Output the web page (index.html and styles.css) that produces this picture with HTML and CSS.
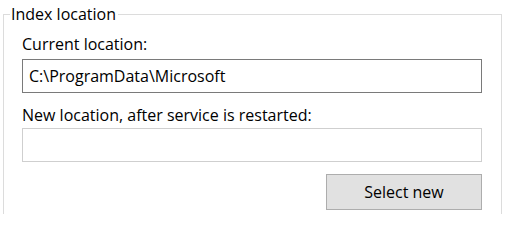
FILE: index.html
```html
<!DOCTYPE html>
<html>
<head>
<meta charset="utf-8">
<link rel="stylesheet" href="styles.css">
</head>
<body>
<fieldset class="group">
  <legend class="group-title">Index location</legend>
  <div class="label label-first">Current location:</div>
  <div class="field field-current">C:\ProgramData\Microsoft</div>
  <div class="label label-second">New location, after service is restarted:</div>
  <div class="field field-new"></div>
  <div class="actions">
    <button class="btn" type="button">Select new</button>
  </div>
</fieldset>
</body>
</html>
```

FILE: styles.css
```css
html, body {
  margin: 0;
  padding: 0;
  background: #ffffff;
}
body {
  font-family: "Open Sans", "Noto Sans", sans-serif;
  font-size: 16px;
  color: #000000;
  width: 530px;
  height: 214px;
  overflow: hidden;
}
.group {
  margin: 4px 0 0 3px;
  width: 499px;
  box-sizing: border-box;
  border: 1px solid #dcdcdc;
  padding: 0 19px 40px 18px;
  min-width: 0;
}
.group-title {
  margin-left: -12px;
  padding: 0 2px 0 1px;
  line-height: 20px;
  height: 20px;
}
.label {
  line-height: 20px;
  white-space: nowrap;
}
.label-first {
  margin-top: 10px;
}
.label-second {
  margin-top: 12px;
}
.field {
  height: 34px;
  box-sizing: border-box;
  margin-top: 5px;
  padding: 0 6px;
  line-height: 32px;
  background: #ffffff;
}
.field-current {
  border: 1px solid #7a7a7a;
}
.field-new {
  border: 1px solid #cfcfcf;
  margin-top: 3px;
}
.actions {
  display: flex;
  justify-content: flex-end;
  margin-top: 12px;
}
.btn {
  width: 156px;
  height: 36px;
  box-sizing: border-box;
  border: 1px solid #adadad;
  background: #e1e1e1;
  font-family: inherit;
  font-size: 16px;
  color: #000000;
  padding: 0;
}
```
